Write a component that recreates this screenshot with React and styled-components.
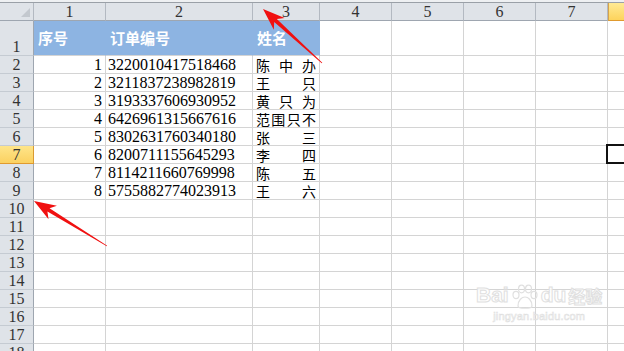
import React from 'react';
import styled, { createGlobalStyle } from 'styled-components';

const GlobalStyle = createGlobalStyle`
    html, body {
        margin: 0;
        padding: 0;
        background: #ffffff;
        overflow: hidden;
    }
    body {
        font-family: "Liberation Serif", serif;
    }
`;

const DIGITS = '"Liberation Serif", "Noto Sans CJK SC", serif';
const CJK = '"Noto Sans CJK SC", "Noto Sans", sans-serif';

const Page = styled.div`
    position: relative;
    width: 624px;
    height: 351px;
    overflow: hidden;
    background: #fff;
`;

const Sheet = styled.div`
    display: flex;
    flex-direction: column;
    width: 720px;
`;

const TopStrip = styled.div`
    height: 2px;
    background: #eef0f2;
    border-bottom: 1px solid #9aa0a7;
`;

const Row = styled.div`
    display: flex;
    height: ${(p) => p.$h}px;
`;

const Corner = styled.div`
    position: relative;
    width: 34px;
    box-sizing: border-box;
    background: #dfe3e8;
    border-right: 1px solid #b3b9c1;
    border-bottom: 1px solid #9ea6b0;
    &::after {
        content: '';
        position: absolute;
        right: 3px;
        bottom: 3px;
        border-style: solid;
        border-width: 0 0 9px 9px;
        border-color: transparent transparent #c3c8ce transparent;
    }
`;

const ColHead = styled.div`
    width: ${(p) => p.$w}px;
    flex: none;
    box-sizing: border-box;
    display: flex;
    align-items: center;
    justify-content: center;
    font-family: ${DIGITS};
    font-size: 16px;
    line-height: 17px;
    color: #333;
    background: ${(p) => (p.$active ? 'linear-gradient(#ffea94, #fdd35c)' : '#dfe3e8')};
    border-right: 1px solid ${(p) => (p.$active ? '#d5a34c' : '#b3b9c1')};
    border-bottom: 1px solid ${(p) => (p.$active ? '#e09a2e' : '#9ea6b0')};
    border-left: ${(p) => (p.$active ? '1px solid #d5a34c' : 'none')};
`;

const RowHead = styled.div`
    width: 34px;
    flex: none;
    box-sizing: border-box;
    display: flex;
    align-items: flex-end;
    justify-content: center;
    font-family: ${DIGITS};
    font-size: 16px;
    line-height: 17px;
    color: #333;
    background: ${(p) => (p.$active ? 'linear-gradient(#fee58a, #fbd160)' : '#dfe3e8')};
    border-right: 1px solid ${(p) => (p.$active ? '#d99a32' : '#9ea6b0')};
    border-bottom: 1px solid ${(p) => (p.$active ? '#e09a2e' : '#c5cbd2')};
`;

const Cell = styled.div`
    position: relative;
    width: ${(p) => p.$w}px;
    flex: none;
    box-sizing: border-box;
    display: flex;
    align-items: center;
    justify-content: ${(p) => p.$align || 'flex-start'};
    padding: 0 3px 0 2px;
    font-family: ${DIGITS};
    font-size: 16px;
    line-height: 17px;
    color: #000;
    background: ${(p) => p.$fill || '#fff'};
    border-right: 1px solid ${(p) => p.$fill || '#d4d4d4'};
    border-bottom: 1px solid #d4d4d4;
    white-space: nowrap;
    ${(p) =>
        p.$selected &&
        `&::after {
            content: '';
            position: absolute;
            left: -2px;
            top: -2px;
            right: -1px;
            bottom: -1px;
            border: 2px solid #111;
        }`}
`;

const TitleText = styled.span`
    font-family: ${CJK};
    font-size: 15px;
    line-height: 18px;
    font-weight: bold;
    color: #fff;
    padding-left: 2px;
`;

const Names = styled.div`
    flex: 1;
    display: flex;
    justify-content: space-between;
    padding: 0 0 0 1px;
    font-family: ${CJK};
    font-size: 14px;
    line-height: 16px;
`;

const Watermark = styled.div`
    position: absolute;
    left: 476px;
    top: 283px;
    display: flex;
    flex-direction: column;
    align-items: center;
    color: rgba(255, 255, 255, 0.85);
    -webkit-text-stroke: 1px #e0e0e0;
    pointer-events: none;
`;

const MarkTop = styled.div`
    display: flex;
    align-items: flex-end;
    font-family: "Liberation Sans", sans-serif;
    font-weight: bold;
    font-size: 21px;
    line-height: 24px;
`;

const MarkCjk = styled.span`
    font-family: ${CJK};
    font-size: 17px;
    line-height: 22px;
    margin-left: 2px;
`;

const MarkUrl = styled.div`
    font-family: "Liberation Sans", sans-serif;
    font-size: 11px;
    line-height: 13px;
    -webkit-text-stroke: 0.6px #e0e0e0;
    margin-top: 3px;
    letter-spacing: 0.2px;
`;

const ArrowLayer = styled.svg`
    position: absolute;
    left: 0;
    top: 0;
    pointer-events: none;
`;

const COLS = [72, 147, 67, 72, 72, 72, 72];
const BLUE = '#8db4e2';

const DATA = [
    [1, '3220010417518468', ['陈', '中', '办']],
    [2, '3211837238982819', ['王', '只']],
    [3, '3193337606930952', ['黄', '只', '为']],
    [4, '6426961315667616', ['范', '围', '只', '不']],
    [5, '8302631760340180', ['张', '三']],
    [6, '8200711155645293', ['李', '四']],
    [7, '8114211660769998', ['陈', '五']],
    [8, '5755882774023913', ['王', '六']],
];

// red annotation arrow: thin tapering shaft and a notched head
const Arrow = ({ tip, tail }) => {
    const dx = tip[0] - tail[0];
    const dy = tip[1] - tail[1];
    const len = Math.hypot(dx, dy);
    const ux = dx / len;
    const uy = dy / len;
    const nx = -uy;
    const ny = ux;
    const at = (d, w) => [tip[0] - ux * d + nx * w, tip[1] - uy * d + ny * w];
    const pts = [
        tip,
        at(22, 8),
        at(17, 2),
        [tail[0] + nx * 0.4, tail[1] + ny * 0.4],
        [tail[0] - nx * 0.4, tail[1] - ny * 0.4],
        at(17, -2),
        at(22, -8),
    ];
    return <polygon points={pts.map((q) => q.join(',')).join(' ')} fill="#f01010" />;
};

const Paw = () => (
    <svg width="30" height="26" viewBox="0 0 30 26" style={{ margin: '0 1px -3px' }}>
        <g fill="none" stroke="#e0e0e0" strokeWidth="1.2">
            <ellipse cx="6" cy="11" rx="3" ry="3.6" />
            <ellipse cx="11.5" cy="5" rx="3" ry="3.8" />
            <ellipse cx="18.5" cy="5" rx="3" ry="3.8" />
            <ellipse cx="24" cy="11" rx="3" ry="3.6" />
            <path d="M8 22 C8 16 12 13 15 13 C18 13 22 16 22 22 C22 25 8 25 8 22 Z" />
        </g>
    </svg>
);

const emptyRows = Array.from({ length: 9 }, (_, i) => i + 10);

const App = () => {
    return (
        <Page>
            <GlobalStyle />
            <Sheet>
                <TopStrip />
                <Row $h={18}>
                    <Corner />
                    {COLS.map((w, i) => (
                        <ColHead key={i} $w={w}>{i + 1}</ColHead>
                    ))}
                    <ColHead $w={72} $active />
                </Row>
                <Row $h={35}>
                    <RowHead>1</RowHead>
                    <Cell $w={COLS[0]} $fill={BLUE}><TitleText>序号</TitleText></Cell>
                    <Cell $w={COLS[1]} $fill={BLUE}><TitleText>订单编号</TitleText></Cell>
                    <Cell $w={COLS[2]} $fill={BLUE}><TitleText>姓名</TitleText></Cell>
                    {COLS.slice(3).map((w, i) => (
                        <Cell key={i} $w={w} />
                    ))}
                    <Cell $w={72} />
                </Row>
                {DATA.map(([n, code, names], r) => (
                    <Row key={n} $h={18}>
                        <RowHead $active={r + 2 === 7}>{r + 2}</RowHead>
                        <Cell $w={COLS[0]} $align="flex-end">{n}</Cell>
                        <Cell $w={COLS[1]}>{code}</Cell>
                        <Cell $w={COLS[2]}>
                            <Names>
                                {names.map((c, k) => (
                                    <span key={k}>{c}</span>
                                ))}
                            </Names>
                        </Cell>
                        {COLS.slice(3).map((w, i) => (
                            <Cell key={i} $w={w} />
                        ))}
                        <Cell $w={72} $selected={r + 2 === 7} />
                    </Row>
                ))}
                {emptyRows.map((n) => (
                    <Row key={n} $h={18}>
                        <RowHead>{n}</RowHead>
                        {COLS.map((w, i) => (
                            <Cell key={i} $w={w} />
                        ))}
                        <Cell $w={72} />
                    </Row>
                ))}
            </Sheet>
            <Watermark>
                <MarkTop>
                    Bai<Paw />du<MarkCjk>经验</MarkCjk>
                </MarkTop>
                <MarkUrl>jingyan.baidu.com</MarkUrl>
            </Watermark>
            <ArrowLayer width="624" height="351">
                <Arrow tip={[263, 9]} tail={[322, 63]} />
                <Arrow tip={[34, 201]} tail={[107, 246]} />
            </ArrowLayer>
        </Page>
    );
};

export default App;
